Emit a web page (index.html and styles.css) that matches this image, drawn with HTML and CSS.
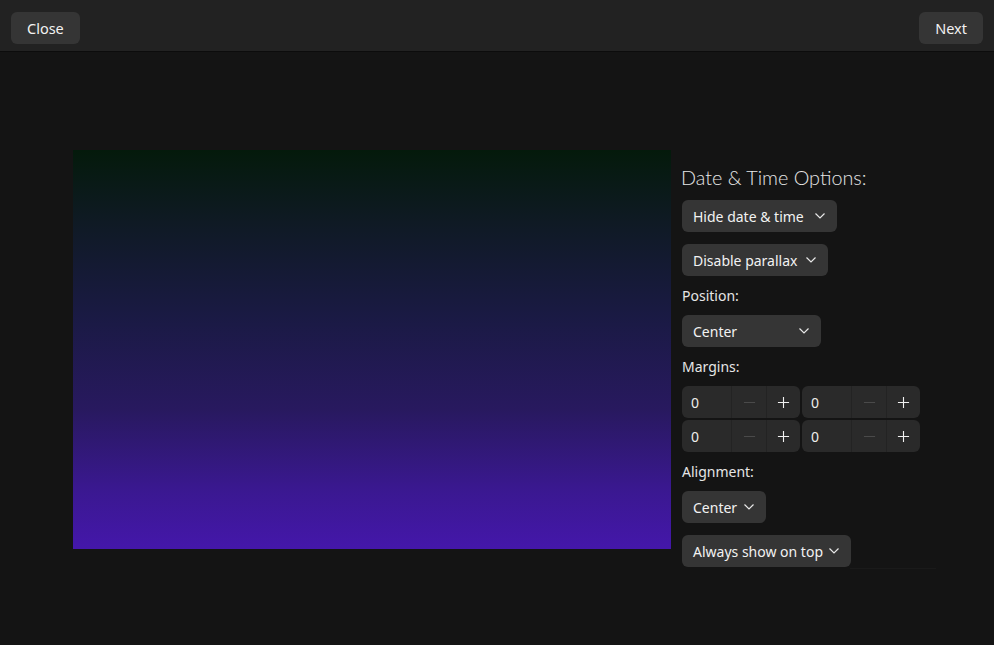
FILE: index.html
```html
<!DOCTYPE html>
<html>
<head>
<meta charset="utf-8">
<link rel="stylesheet" href="styles.css">
</head>
<body>
<header class="headerbar">
  <button class="btn hb-btn">Close</button>
  <button class="btn hb-btn">Next</button>
</header>
<main class="content">
  <div class="preview"></div>
  <section class="panel">
    <h1 class="title">Date &amp; Time Options:</h1>
    <button class="btn dd w-hide"><span>Hide date &amp; time</span><svg class="chev" viewBox="0 0 10 6"><path d="M0.5 0.5 L5 5 L9.5 0.5"/></svg></button>
    <button class="btn dd w-par gap"><span>Disable parallax</span><svg class="chev" viewBox="0 0 10 6"><path d="M0.5 0.5 L5 5 L9.5 0.5"/></svg></button>
    <div class="label">Position:</div>
    <button class="btn dd w-pos"><span>Center</span><svg class="chev" viewBox="0 0 10 6"><path d="M0.5 0.5 L5 5 L9.5 0.5"/></svg></button>
    <div class="label">Margins:</div>
    <div class="spins">
      <div class="spin"><span class="val">0</span><span class="seg dim"><svg viewBox="0 0 14 14"><path d="M1 7 H13"/></svg></span><span class="seg"><svg viewBox="0 0 14 14"><path d="M1 7 H13 M7 1 V13"/></svg></span></div>
      <div class="spin"><span class="val">0</span><span class="seg dim"><svg viewBox="0 0 14 14"><path d="M1 7 H13"/></svg></span><span class="seg"><svg viewBox="0 0 14 14"><path d="M1 7 H13 M7 1 V13"/></svg></span></div>
      <div class="spin"><span class="val">0</span><span class="seg dim"><svg viewBox="0 0 14 14"><path d="M1 7 H13"/></svg></span><span class="seg"><svg viewBox="0 0 14 14"><path d="M1 7 H13 M7 1 V13"/></svg></span></div>
      <div class="spin"><span class="val">0</span><span class="seg dim"><svg viewBox="0 0 14 14"><path d="M1 7 H13"/></svg></span><span class="seg"><svg viewBox="0 0 14 14"><path d="M1 7 H13 M7 1 V13"/></svg></span></div>
    </div>
    <div class="label">Alignment:</div>
    <button class="btn dd w-al"><span>Center</span><svg class="chev" viewBox="0 0 10 6"><path d="M0.5 0.5 L5 5 L9.5 0.5"/></svg></button>
    <button class="btn dd w-top gap"><span>Always show on top</span><svg class="chev" viewBox="0 0 10 6"><path d="M0.5 0.5 L5 5 L9.5 0.5"/></svg></button>
    <div class="rule"></div>
  </section>
</main>
</body>
</html>
```

FILE: styles.css
```css
* { box-sizing: border-box; }
html, body { margin: 0; height: 100%; }
body {
  background: #141414;
  color: #eeeeec;
  font-family: "Noto Sans", "DejaVu Sans", sans-serif;
  font-size: 14px;
  overflow: hidden;
}
.headerbar {
  height: 52px;
  background: #222222;
  border-bottom: 1px solid #0c0c0c;
  display: flex;
  justify-content: space-between;
  align-items: flex-start;
  padding: 12px 11px 0 11px;
}
.btn {
  font: inherit;
  color: #f2f2f2;
  background: #353535;
  border: none;
  border-radius: 6px;
  height: 32px;
  padding: 0 12px;
  display: flex;
  align-items: center;
  cursor: default;
}
.hb-btn { height: 32px; padding: 0 16px; font-size: 14.5px; }
.content {
  display: flex;
  padding: 98px 0 0 73px;
  gap: 10px;
}
.preview {
  width: 598px;
  height: 399px;
  background: linear-gradient(180deg, #041a0b 0%, #0f1a24 18%, #1a1a44 42%, #28195f 65%, #3a1890 85%, #4417aa 100%);
  flex: none;
}
.panel {
  display: flex;
  flex-direction: column;
  align-items: flex-start;
  padding: 14px 0 0 1px;
  width: 255px;
}
.title {
  margin: 0 0 9px -1px;
  font-family: Lato, "Noto Sans", sans-serif;
  font-weight: 300;
  font-size: 19.8px;
  line-height: 27px;
  color: #e6e6e6;
}
.dd { justify-content: space-between; padding: 0 12px 0 11px; }
.dd .chev { width: 10px; height: 6px; fill: none; stroke: #e8e8e8; stroke-width: 1.2; flex: none; }
.w-hide { width: 155px; }
.w-par { width: 146px; }
.w-pos { width: 139px; }
.w-al { width: 84px; }
.w-top { width: 169px; }
.gap { margin-top: 12px; }
.label {
  margin: 10px 0 9px 0;
  line-height: 20px;
  color: #e6e6e6;
}
.spins {
  display: grid;
  grid-template-columns: 118px 118px;
  column-gap: 2px;
  row-gap: 2px;
}
.spin {
  height: 32px;
  background: #2a2a2a;
  border-radius: 6px;
  display: flex;
  overflow: hidden;
}
.spin .val {
  width: 50px;
  padding-left: 9px;
  display: flex;
  align-items: center;
  border-right: 1px solid #232323;
}
.spin .seg {
  width: 34px;
  display: flex;
  align-items: center;
  justify-content: center;
}
.spin .seg + .seg { border-left: 1px solid #232323; }
.spin .seg svg { width: 13px; height: 13px; fill: none; stroke: #f0f0f0; stroke-width: 1.2; }
.spin .seg.dim svg { stroke: #4a4a4a; }
.rule {
  align-self: stretch;
  margin: 1px 0 0 168px;
  height: 1px;
  background: #1a1a1a;
}
```
